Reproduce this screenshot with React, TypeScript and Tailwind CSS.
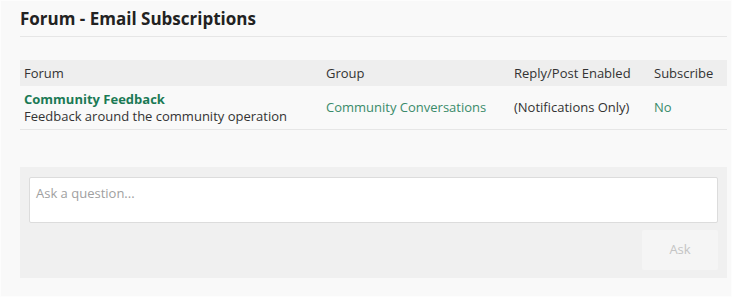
import React from "react";

export default function App() {
  return (
    <div
      className="w-[732px] h-[297px] bg-[#f9f9f9] border border-[#fdfdfd] pl-[19px] pr-[4px] pt-[6px] text-[#333]"
      style={{ fontFamily: '"Open Sans", "Noto Sans", sans-serif' }}
    >
      <h2 className="text-[17px] leading-[24px] font-bold text-[#222] pb-[5px] border-b border-[#e6e6e6]">
        Forum - Email Subscriptions
      </h2>
      <div className="mt-[23px]">
        <div className="grid grid-cols-[302px_188px_140px_1fr] bg-[#eeeeee] h-[26px] items-center text-[13px]">
          <div className="pl-[4px] pt-[1px]">Forum</div>
          <div className="pl-[4px] pt-[1px]">Group</div>
          <div className="pl-[4px] pt-[1px]">Reply/Post Enabled</div>
          <div className="pl-[4px] pt-[1px]">Subscribe</div>
        </div>
        <div className="grid grid-cols-[302px_188px_140px_1fr] h-[44px] items-center text-[13px] border-b border-[#e6e6e6]">
          <div className="pl-[4px] pt-[1px] leading-[17px]">
            <div className="font-bold text-[#1b7a55]">Community Feedback</div>
            <div>Feedback around the community operation</div>
          </div>
          <div className="pl-[4px] pt-[1px] text-[#3a8b6a]">Community Conversations</div>
          <div className="pl-[4px] pt-[1px]">(Notifications Only)</div>
          <div className="pl-[4px] pt-[1px] text-[#3a8b6a]">No</div>
        </div>
      </div>
      <div className="mt-[37px] bg-[#f0f0f0] pt-[10px] pb-[8px] px-[9px] flex flex-col">
        <div className="h-[46px] bg-white border border-[#dcdcdc] rounded-[2px] px-[6px] pt-[6px] text-[13px] text-[#a0a0a0]">
          Ask a question...
        </div>
        <div className="flex justify-end mt-[7px]">
          <button className="w-[76px] h-[40px] bg-[#f5f5f5] rounded-[2px] text-[13px] text-[#c4c4c4]">
            Ask
          </button>
        </div>
      </div>
    </div>
  );
}
